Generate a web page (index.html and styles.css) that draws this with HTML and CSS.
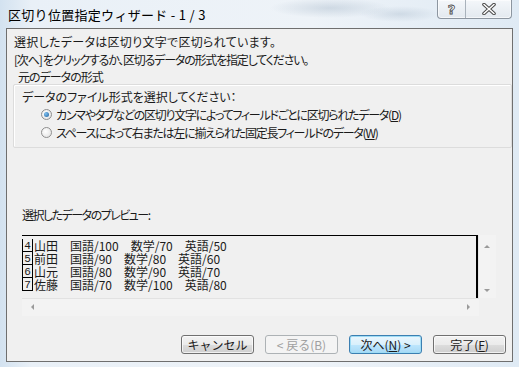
FILE: index.html
```html
<!DOCTYPE html>
<html lang="ja">
<head>
  <meta charset="UTF-8">
  <title>区切り位置指定ウィザード</title>
  <link rel="stylesheet" href="styles.css">
</head>
<body>
  <div class="window">
    <!-- caption -->
    <div class="titlebar">
      <span class="title">区切り位置指定ウィザード - 1 / 3</span>
      <div class="caption-btns">
        <span class="cap-btn help">?</span>
        <span class="cap-btn close">
          <svg width="16" height="12" viewBox="0 0 16 12">
            <path d="M3 1.5 L13 10.5 M13 1.5 L3 10.5" stroke="#4a4a4a" stroke-width="3.6" stroke-linecap="round"/>
            <path d="M3 1.5 L13 10.5 M13 1.5 L3 10.5" stroke="#ffffff" stroke-width="1.6" stroke-linecap="round"/>
          </svg>
        </span>
      </div>
    </div>

    <div class="client">
      <p class="line first">選択したデータは区切り文字で区切られています。</p>
      <p class="line second">[次へ] をクリックするか、区切るデータの形式を指定してください。</p>

      <!-- source data type -->
      <div class="group-label">元のデータの形式</div>
      <div class="group">
        <p class="group-text">データのファイル形式を選択してください：</p>
        <div class="radio-row"><span class="radio checked"></span>カンマやタブなどの区切り文字によってフィールドごとに区切られたデータ(<u>D</u>)</div>
        <div class="radio-row"><span class="radio"></span>スペースによって右または左に揃えられた固定長フィールドのデータ(<u>W</u>)</div>
      </div>

      <!-- preview -->
      <p class="preview-label">選択したデータのプレビュー:</p>
      <div class="preview">
        <div class="preview-top">
          <div class="preview-rows">
            <div class="row"><span class="num">4</span><span class="cells">山田　国語/100　数学/70　英語/50</span></div>
            <div class="row"><span class="num">5</span><span class="cells">前田　国語/90　数学/80　英語/60</span></div>
            <div class="row"><span class="num">6</span><span class="cells">山元　国語/80　数学/90　英語/70</span></div>
            <div class="row"><span class="num">7</span><span class="cells">佐藤　国語/70　数学/100　英語/80</span></div>
          </div>
          <div class="vscroll">
            <span class="arrow up"></span>
            <span class="arrow down"></span>
          </div>
        </div>
        <div class="hscroll">
          <span class="arrow left"></span>
          <span class="arrow right"></span>
        </div>
      </div>

      <div class="buttons">
        <button class="btn">キャンセル</button>
        <button class="btn disabled">&lt; 戻る(B)</button>
        <button class="btn default">次へ(<u>N</u>) &gt;</button>
        <button class="btn">完了(<u>F</u>)</button>
      </div>
    </div>
  </div>
</body>
</html>
```

FILE: styles.css
```css
:root {
  --face: #f0f0f0;
  --text: #1a1a1a;
  --frame-border: #6f6f6f;
}

html, body {
  margin: 0;
  padding: 0;
}

body {
  width: 519px;
  height: 367px;
  overflow: hidden;
  font-family: "Noto Sans CJK JP", sans-serif;
  font-size: 12px;
  color: var(--text);
  font-feature-settings: "palt";
}

.window {
  width: 519px;
  height: 367px;
  box-sizing: border-box;
  padding: 0 6px 5px 6px;
  background:
    radial-gradient(ellipse 60px 10px at 330px 8px, rgba(150,170,190,0.35), transparent),
    radial-gradient(ellipse 40px 8px at 400px 14px, rgba(150,170,190,0.3), transparent),
    linear-gradient(90deg, #d3e2f0 0%, #e9f0f7 6%, #eef3f8 60%, #dfeaf4 100%);
  display: flex;
  flex-direction: column;
}

.titlebar {
  height: 28px;
  display: flex;
  justify-content: space-between;
  align-items: flex-start;
}

.title {
  margin: 6px 0 0 2px;
  font-size: 13px;
  line-height: 18px;
  letter-spacing: 0.3px;
  color: #000;
  font-feature-settings: normal;
}

.caption-btns {
  display: flex;
  margin-right: 1px;
  border: 1px solid #8d96a0;
  border-top: none;
  border-radius: 0 0 4px 4px;
  background: linear-gradient(#f4f7fa, #e3e9ef);
  box-shadow: inset 0 0 0 1px rgba(255,255,255,0.6);
}

.cap-btn {
  height: 18px;
  display: flex;
  align-items: center;
  justify-content: center;
}

.help {
  width: 27px;
  border-right: 1px solid #a9b2bb;
  font-family: "DejaVu Sans", sans-serif;
  font-size: 13px;
  font-weight: bold;
  color: #fff;
  -webkit-text-stroke: 0.8px #4a4a4a;
}

.close {
  width: 45px;
}

.client {
  flex: 1;
  background: var(--face);
  border: 1px solid var(--frame-border);
  padding: 4px 6px 0 7px;
}

.line {
  margin: 0;
  line-height: 18px;
}

.line.first {
  letter-spacing: 0.3px;
}

.line.second {
  letter-spacing: -1.2px;
}

.group-label {
  margin: 1px 0 0 4px;
  line-height: 14px;
  letter-spacing: -1px;
}

.group {
  margin-left: -1px;
  width: 489px;
  border: 1px solid #dcdcdc;
  border-radius: 2px;
  box-shadow: 1px 1px 0 #fff inset;
  padding: 4px 0 6px 8px;
}

.group-text {
  margin: 0;
  line-height: 16px;
}

.radio-row {
  height: 18px;
  display: flex;
  align-items: center;
  padding-left: 19px;
  letter-spacing: -1.25px;
}

.radio-row u {
  text-underline-offset: 1px;
}

.radio {
  width: 11px;
  height: 11px;
  box-sizing: border-box;
  border-radius: 50%;
  border: 1px solid #8f8f8f;
  background: radial-gradient(circle at 40% 40%, #ffffff, #dedede);
  margin-right: 4px;
  display: flex;
  align-items: center;
  justify-content: center;
}

.radio.checked::after {
  content: "";
  width: 5px;
  height: 5px;
  border-radius: 50%;
  background: radial-gradient(circle at 35% 35%, #7fc1f0, #1f5f9c);
}

.preview-label {
  margin: 59px 0 0 8px;
  line-height: 16px;
  letter-spacing: -1.5px;
}

.preview {
  margin: 12px 0 0 8px;
  width: 474px;
  height: 81px;
  display: flex;
  flex-direction: column;
}

.preview-top {
  display: flex;
  height: 64px;
}

.preview-rows {
  width: 457px;
  box-sizing: border-box;
  padding-top: 3px;
  border-top: 1px solid #000;
  border-right: 2px solid #000;
  overflow: hidden;
  font-feature-settings: normal;
}

.row {
  height: 13px;
  display: flex;
  align-items: stretch;
  line-height: 13px;
}

.num {
  width: 11px;
  box-sizing: border-box;
  border-left: 1px solid #000;
  border-right: 1px solid #000;
  border-bottom: 1px solid #000;
  font-family: "Liberation Mono", monospace;
  font-size: 11px;
  text-align: center;
  line-height: 14px;
}

.cells {
  padding-left: 1px;
  white-space: pre;
}

.vscroll {
  width: 17px;
  background: #f3f3f3;
  border-left: 1px solid #e6e6e6;
  position: relative;
}

.hscroll {
  height: 17px;
  width: 457px;
  background: #f3f3f3;
  border-top: 1px solid #e2e2e2;
  position: relative;
}

.arrow {
  position: absolute;
  width: 0;
  height: 0;
  border: 3px solid transparent;
}

.arrow.up {
  left: 5px;
  top: 7px;
  border-bottom: 3px solid #9a9a9a;
}

.arrow.down {
  left: 5px;
  top: 54px;
  border-top: 3px solid #9a9a9a;
}

.arrow.left {
  left: 6px;
  top: 5px;
  border-right: 3px solid #9a9a9a;
}

.arrow.right {
  right: 6px;
  top: 5px;
  border-left: 3px solid #9a9a9a;
}

.buttons {
  margin-top: 19px;
  display: flex;
  justify-content: flex-end;
  gap: 11px;
}

.btn {
  width: 73px;
  height: 19px;
  padding: 0;
  font-family: inherit;
  font-size: 12px;
  color: var(--text);
  border: 1px solid #707070;
  border-radius: 3px;
  background: linear-gradient(#f2f2f2 0%, #ebebeb 50%, #dddddd 51%, #cfcfcf 100%);
  box-shadow: inset 0 0 0 1px rgba(255,255,255,0.7);
  line-height: 16px;
}

.btn.disabled {
  color: #a0a0a0;
  border-color: #adb2b5;
  background: #f4f4f4;
  box-shadow: none;
}

.btn.default {
  border-color: #3c7fb1;
  box-shadow: inset 0 0 0 1px #9edcf5;
  background: linear-gradient(#eaf6fd 0%, #d9f0fc 50%, #bee6fd 51%, #a7d9f5 100%);
}
```
